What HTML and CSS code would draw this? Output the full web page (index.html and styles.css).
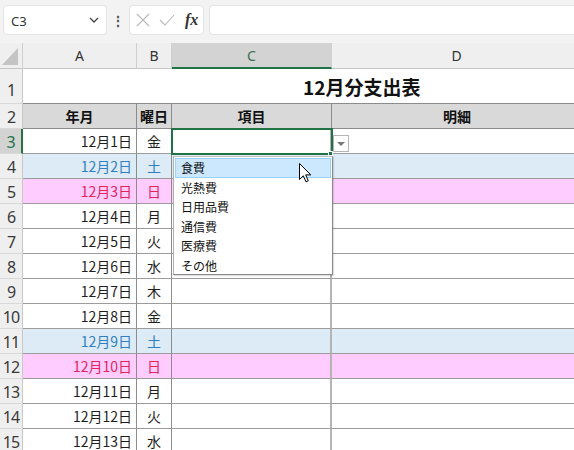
FILE: index.html
```html
<!DOCTYPE html>
<html lang="ja">
<head>
<meta charset="utf-8">
<title>12月分支出表</title>
<link rel="stylesheet" href="styles.css">
</head>
<body>
<div class="toolbar">
  <div class="namebox"><span>C3</span><svg class="chev" width="10" height="6" viewBox="0 0 10 6"><path d="M1 1 L5 5 L9 1" fill="none" stroke="#444" stroke-width="1.3"/></svg></div>
  <div class="dots">⋮</div>
  <div class="fxgroup">
    <svg width="14" height="14" viewBox="0 0 14 14"><path d="M1 1 L13 13 M13 1 L1 13" stroke="#b9b9b9" stroke-width="1.1" fill="none"/></svg>
    <svg width="16" height="14" viewBox="0 0 16 14"><path d="M1 7 L6 12 L15 2" stroke="#b9b9b9" stroke-width="1.1" fill="none"/></svg>
    <span class="fx">fx</span>
  </div>
  <div class="formula"></div>
</div>

<div class="sheet">
  <div class="corner"></div>
  <div class="ch">A</div>
  <div class="ch">B</div>
  <div class="ch ch-sel">C</div>
  <div class="ch">D</div>

  <div class="rh rh-tall">1</div>
  <div class="title">12月分支出表</div>

  <div class="rh">2</div>
  <div class="hd">年月</div>
  <div class="hd">曜日</div>
  <div class="hd">項目</div>
  <div class="hd hd-last">明細</div>

  <div class="rh rh-sel">3</div>
  <div class="c ca">12月1日</div><div class="c cb">金</div><div class="c cc c-sel"><span class="handle"></span></div><div class="c cd cd-btn"><span class="ddbtn"><svg width="8" height="4" viewBox="0 0 8 4"><path d="M0 0 L8 0 L4 4 Z" fill="#777"/></svg></span></div>

  <div class="rh">4</div>
  <div class="c ca sat">12月2日</div><div class="c cb sat">土</div><div class="c cc sat"></div><div class="c cd sat"></div>

  <div class="rh">5</div>
  <div class="c ca sun">12月3日</div><div class="c cb sun">日</div><div class="c cc sun"></div><div class="c cd sun"></div>

  <div class="rh">6</div>
  <div class="c ca">12月4日</div><div class="c cb">月</div><div class="c cc"></div><div class="c cd"></div>

  <div class="rh">7</div>
  <div class="c ca">12月5日</div><div class="c cb">火</div><div class="c cc"></div><div class="c cd"></div>

  <div class="rh">8</div>
  <div class="c ca">12月6日</div><div class="c cb">水</div><div class="c cc"></div><div class="c cd"></div>

  <div class="rh">9</div>
  <div class="c ca">12月7日</div><div class="c cb">木</div><div class="c cc"></div><div class="c cd"></div>

  <div class="rh">10</div>
  <div class="c ca">12月8日</div><div class="c cb">金</div><div class="c cc"></div><div class="c cd"></div>

  <div class="rh">11</div>
  <div class="c ca sat">12月9日</div><div class="c cb sat">土</div><div class="c cc sat"></div><div class="c cd sat"></div>

  <div class="rh">12</div>
  <div class="c ca sun">12月10日</div><div class="c cb sun">日</div><div class="c cc sun"></div><div class="c cd sun"></div>

  <div class="rh">13</div>
  <div class="c ca">12月11日</div><div class="c cb">月</div><div class="c cc"></div><div class="c cd"></div>

  <div class="rh">14</div>
  <div class="c ca">12月12日</div><div class="c cb">火</div><div class="c cc"></div><div class="c cd"></div>

  <div class="rh">15</div>
  <div class="c ca">12月13日</div><div class="c cb">水</div><div class="c cc"></div><div class="c cd"></div>

  <ul class="dropdown">
    <li class="hover">食費</li>
    <li>光熱費</li>
    <li>日用品費</li>
    <li>通信費</li>
    <li>医療費</li>
    <li>その他</li>
  </ul>

  <svg class="cursor" width="13" height="20" viewBox="0 0 13 20"><path d="M0.5 0.5 L0.5 16.5 L4.3 12.8 L7 18.8 L9.3 17.8 L6.7 11.9 L11.8 11.9 Z" fill="#fff" stroke="#000" stroke-width="1"/></svg>
</div>
</body>
</html>
```

FILE: styles.css
```css
* { box-sizing: border-box; }

body {
  margin: 0;
  width: 574px;
  height: 450px;
  overflow: hidden;
  background: #fff;
  font-family: "Noto Sans CJK JP", sans-serif;
  color: #1e1e1e;
}

/* formula bar */
.toolbar {
  display: flex;
  align-items: center;
  height: 43px;
  padding: 0 0 3px 3px;
  background: #f3f3f3;
  overflow: hidden;
}

.namebox {
  flex: none;
  width: 104px;
  height: 30px;
  background: #fff;
  border: 1px solid #e4e4e4;
  border-radius: 4px;
  display: flex;
  align-items: center;
  justify-content: space-between;
  padding: 0 7px 0 7px;
  font-family: "Noto Sans", sans-serif;
  font-size: 13px;
  color: #333;
}

.namebox span { padding-top: 2px; }

.dots {
  flex: none;
  width: 22px;
  text-align: center;
  font-size: 14px;
  font-weight: bold;
  color: #555;
}

.fxgroup {
  flex: none;
  width: 75px;
  height: 30px;
  background: #fff;
  border: 1px solid #e4e4e4;
  border-radius: 4px;
  display: flex;
  align-items: center;
  gap: 9px;
  padding-left: 6px;
}

.fx {
  font-family: "Liberation Serif", serif;
  font-style: italic;
  font-weight: bold;
  font-size: 16px;
  color: #333;
  margin-left: 1px;
}

.formula {
  flex: none;
  width: 400px;
  height: 30px;
  margin-left: 5px;
  background: #fff;
  border: 1px solid #e4e4e4;
  border-radius: 4px;
}

/* sheet grid */
.sheet {
  position: relative;
  display: grid;
  grid-template-columns: 23px 114px 35px 160px 250px;
  grid-template-rows: 26px 35px repeat(14, 25px);
}

.corner {
  position: relative;
  background: #efefef;
  border-right: 1px solid #d0d0d0;
  border-bottom: 1px solid #c6c6c6;
}

.corner::after {
  content: "";
  position: absolute;
  right: 4px;
  bottom: 3px;
  width: 16px;
  height: 17px;
  background: #c4c4c4;
  clip-path: polygon(100% 0, 100% 100%, 0 100%);
}

.ch {
  background: #efefef;
  border-right: 1px solid #d0d0d0;
  border-bottom: 1px solid #c6c6c6;
  display: flex;
  align-items: center;
  justify-content: center;
  font-family: "Noto Sans", sans-serif;
  font-size: 14px;
  color: #333;
}

.ch-sel {
  background: #d3d3d3;
  color: #3c6e52;
  border-bottom: 2px solid #217346;
}

.rh {
  background: #efefef;
  border-right: 1px solid #c8c8c8;
  border-bottom: 1px solid #d8d8d8;
  display: flex;
  align-items: center;
  justify-content: center;
  font-family: "Noto Sans", sans-serif;
  font-size: 16px;
  letter-spacing: -1px;
  color: #3a3a3a;
  padding-top: 2px;
}

.rh-tall {
  align-items: flex-end;
  padding-bottom: 2px;
}

.rh-sel {
  background: #d3d3d3;
  color: #217346;
  border-right: 2px solid #217346;
}

.title {
  grid-column: 2 / 6;
  display: flex;
  align-items: center;
  padding-left: 280px;
  font-size: 19px;
  font-weight: bold;
  color: #111;
  border-bottom: 1px solid #8c8c8c;
}

.hd {
  background: #d9d9d9;
  border-right: 1px solid #8c8c8c;
  border-bottom: 1px solid #8c8c8c;
  display: flex;
  align-items: center;
  justify-content: center;
  font-size: 14px;
  font-weight: bold;
  color: #111;
}

.hd-last { border-right: none; }

.c {
  border-right: 1px solid #8c8c8c;
  border-bottom: 1px solid #9c9c9c;
  display: flex;
  align-items: center;
  font-size: 14px;
  color: #1e1e1e;
}

.ca { justify-content: flex-end; padding-right: 4px; }
.cb { justify-content: center; }
.cc { border-right: 2px solid #b4b4b4; }
.cd { border-right: none; }

.sat { background: #ddebf7; color: #2f7fc1; }
.sun { background: #ffccff; color: #e2245a; }

.c-sel {
  position: relative;
  z-index: 2;
  outline: 2px solid #217346;
  outline-offset: -1px;
}

.handle {
  position: absolute;
  right: -3px;
  bottom: -3px;
  width: 5px;
  height: 5px;
  background: #217346;
  border: 1px solid #fff;
}

.cd-btn {
  align-items: flex-start;
  padding-top: 6px;
  padding-left: 1px;
}

.ddbtn {
  width: 16px;
  height: 17px;
  background: #fff;
  border: 1px solid #b4b4b4;
  display: flex;
  align-items: center;
  justify-content: center;
}

/* data validation list */
.dropdown {
  position: absolute;
  left: 173px;
  top: 113px;
  width: 160px;
  height: 119px;
  margin: 0;
  padding: 1px 1px;
  list-style: none;
  background: #fff;
  border: 1px solid #8a8a8a;
  border-top-color: #c0c0c0;
  border-left-color: #b0b0b0;
  box-shadow: 1px 1px 1px rgba(0, 0, 0, 0.12);
  z-index: 3;
}

.dropdown li {
  height: 19.5px;
  line-height: 18px;
  padding-left: 5px;
  font-size: 12px;
  color: #111;
  border: 1px solid transparent;
}

.dropdown li.hover {
  background: #cce8ff;
  border-color: #99d1ff;
}

.cursor {
  position: absolute;
  left: 299px;
  top: 120px;
  z-index: 4;
}
```
